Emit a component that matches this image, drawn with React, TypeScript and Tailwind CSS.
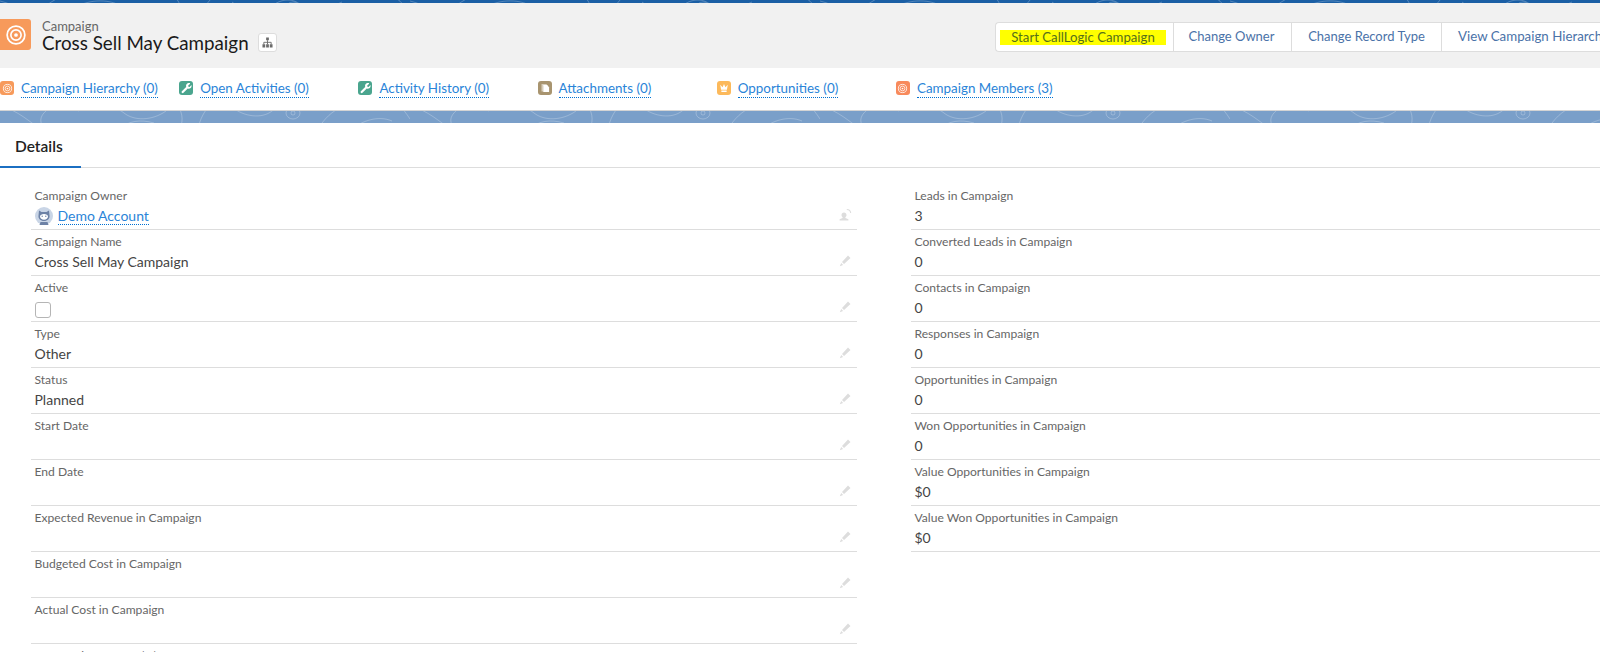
import { ReactNode } from "react";

const leftFields: { label: string; value?: string; kind?: string }[] = [
  { label: "Campaign Owner", kind: "owner" },
  { label: "Campaign Name", value: "Cross Sell May Campaign" },
  { label: "Active", kind: "checkbox" },
  { label: "Type", value: "Other" },
  { label: "Status", value: "Planned" },
  { label: "Start Date" },
  { label: "End Date" },
  { label: "Expected Revenue in Campaign" },
  { label: "Budgeted Cost in Campaign" },
  { label: "Actual Cost in Campaign" },
  { label: "Expected Response (%)" },
];

const rightFields = [
  { label: "Leads in Campaign", value: "3" },
  { label: "Converted Leads in Campaign", value: "0" },
  { label: "Contacts in Campaign", value: "0" },
  { label: "Responses in Campaign", value: "0" },
  { label: "Opportunities in Campaign", value: "0" },
  { label: "Won Opportunities in Campaign", value: "0" },
  { label: "Value Opportunities in Campaign", value: "$0" },
  { label: "Value Won Opportunities in Campaign", value: "$0" },
];

function Contours({ id, y }: { id: string; y: number }) {
  return (
    <svg className="block w-full h-full" aria-hidden="true">
      <defs>
        <pattern id={id} width="410" height="40" patternUnits="userSpaceOnUse" y={y}>
          <g fill="none" stroke="#ffffff" strokeOpacity="0.24" strokeWidth="1">
            <path d="M-6 2c18 2 30 12 46 24M58 0c-14 8-22 14-14 26M78 8c16-8 36-6 46 2s28 8 42-2" />
            <path d="M120 26c8-8 20-10 34-6M176 0c6 8 8 16 4 26M198 26c2-10 6-18 14-26" />
            <path d="M232 4c12 10 30 12 40 4s22-8 30 0M286 10a7 6 0 1 0 14 0a7 6 0 1 0-14 0M291 10a2 2 0 1 0 4 0a2 2 0 1 0-4 0" />
            <path d="M318 26c6-10 14-18 24-22M352 26c10-8 26-14 40-8M396 0c6 4 10 10 14 16" />
          </g>
        </pattern>
      </defs>
      <rect width="100%" height="100%" fill={`url(#${id})`} />
    </svg>
  );
}

function TargetIcon({ size }: { size: number }) {
  return (
    <svg width={size} height={size} viewBox="0 0 24 24" fill="none" stroke="#ffffff" className="block">
      <circle cx="12" cy="12" r="7.6" strokeWidth="1.5" />
      <circle cx="12" cy="12" r="4.4" strokeWidth="1.4" />
      <circle cx="12" cy="12" r="1.6" fill="#ffffff" stroke="none" />
    </svg>
  );
}

function WrenchIcon() {
  return (
    <svg width="14" height="14" viewBox="0 0 24 24" className="block">
      <path
        fill="#ffffff"
        d="M19.2 4.6l-3.4 3.3 .3 2 2 .3 3.3-3.4c.5 2.4-.2 4.4-2 5.6-1.4.9-3 1-4.4.5l-7.3 7.4c-.8.8-2 .8-2.8 0s-.8-2 0-2.8l7.4-7.3c-.5-1.5-.4-3.1.5-4.5 1.300-1.700 3.500-2.500 5.900-2.100z"
      />
    </svg>
  );
}

function DocIcon() {
  return (
    <svg width="14" height="14" viewBox="0 0 24 24" className="block">
      <path fill="#ffffff" fillOpacity="0.55" d="M6 5h9v3H9v10H6z" />
      <path fill="#ffffff" d="M9 7h7l3 4v8H9z" />
    </svg>
  );
}

function CrownIcon() {
  return (
    <svg width="14" height="14" viewBox="0 0 24 24" className="block">
      <path fill="#ffffff" d="M5.500 6.500l4 4L12 5l2.500 5.500 4-4L17 15H7zM7.500 16.200h9V19h-9z" />
    </svg>
  );
}

function Pencil() {
  return (
    <svg width="13" height="13" viewBox="0 0 13 13" className="block">
      <path fill="#dddddd" d="M3 8l6-6.500 2.500 2.500L5 10zM2.200 9l1.900 1.900L.8 12.300z" />
    </svg>
  );
}

function PersonSwap() {
  return (
    <svg width="13" height="13" viewBox="0 0 13 13" className="block">
      <path
        fill="#dddddd"
        d="M5 4.500c1.500 0 2.500 1.200 2.500 2.600 0 1-.5 1.800-1.100 2.200v.7l3 1.200v1.300H.6V11.200l3-1.200v-.7c-.6-.4-1.100-1.200-1.100-2.200 0-1.400 1-2.600 2.500-2.600z"
      />
      <path fill="none" stroke="#dddddd" strokeWidth="1.100" d="M7.800 1.500c2 0 3.700 1.500 3.900 3.500" />
    </svg>
  );
}

function Avatar() {
  return (
    <svg width="18" height="18" viewBox="0 0 18 18" className="block shrink-0">
      <circle cx="9" cy="9" r="9" fill="#c9d5e6" />
      <path fill="#6d82a6" d="M4 3.500l2.500 1.500h5L14 3.500 14.500 8.500c.5 3-2 5.500-5.500 5.500s-6-2.500-5.500-5.500z" />
      <path fill="#ffffff" d="M5 9.500c0-1.600 1.800-2.500 4-2.500s4 .9 4 2.500-1.800 3.200-4 3.200-4-1.600-4-3.200z" />
      <circle cx="7.200" cy="9.300" r=".7" fill="#6d82a6" />
      <circle cx="10.800" cy="9.300" r=".7" fill="#6d82a6" />
      <path fill="#6d82a6" d="M5.500 15h7l1 3h-9z" />
    </svg>
  );
}

function HierarchyIcon() {
  return (
    <svg width="11" height="11" viewBox="0 0 12 12" className="block">
      <path fill="#6b6b6b" d="M4.500 .5h3v3h-3zM.5 8h3v3.500h-3zM4.500 8h3v3.500h-3zM8.500 8h3v3.500h-3z" />
      <path fill="none" stroke="#6b6b6b" d="M6 3.500V8M2 8V5.800h8V8" />
    </svg>
  );
}

function RelatedLink({ bg, icon, text }: { bg: string; icon: ReactNode; text: string }) {
  return (
    <div className="w-[179.200px] flex items-center shrink-0">
      <span className={`w-[14px] h-[14px] rounded-[3px] flex items-center justify-center shrink-0 ${bg}`}>{icon}</span>
      <a className="ml-[7px] text-[13.400px] leading-[18px] text-[#2a84d8] border-b border-dotted border-[#0070d2]">{text}</a>
    </div>
  );
}

function Field({ label, value, kind, editable }: { label: string; value?: string; kind?: string; editable?: boolean }) {
  return (
    <div className="h-[46px] border-b border-[#dddddd] flex justify-between pl-[3.500px] pr-[5px] shrink-0">
      <div className="pt-[4px] min-w-0">
        <div className="text-[12.100px] leading-[16px] text-[#666666]">{label}</div>
        {kind === "owner" && (
          <div className="flex items-center h-[20px] mt-[2px]">
            <Avatar />
            <a className="ml-[5px] text-[14px] leading-[17px] text-[#2a84d8] border-b border-dotted border-[#0070d2]">Demo Account</a>
          </div>
        )}
        {kind === "checkbox" && <div className="mt-[6px] w-[16px] h-[16px] rounded-[3px] border border-[#b5b5b5] bg-white" />}
        {value && <div className="mt-[2px] text-[14px] leading-[20px] text-[#444444]">{value}</div>}
      </div>
      {editable && <div className="self-end pb-[8px]">{kind === "owner" ? <PersonSwap /> : <Pencil />}</div>}
    </div>
  );
}

export default function App() {
  return (
    <div className="h-[652px] w-[1600px] overflow-hidden bg-white font-['Lato','Open_Sans',sans-serif]">
      <div className="h-[3px] bg-[#1b5fa5]">
        <Contours id="strip" y={-2} />
      </div>

      {/* Record header */}
      <div className="h-[65px] bg-[#f1f1f1] flex items-start justify-between">
        <div className="flex items-start pt-[16px]">
          <div className="w-[31px] h-[31px] bg-[#f79a5b] rounded-r-[3px] flex items-center justify-center">
            <TargetIcon size={28} />
          </div>
          <div className="ml-[11px] pt-[0.500px]">
            <div className="text-[13px] leading-[13px] text-[#666666]">Campaign</div>
            <div className="flex items-center">
              <h1 className="text-[18.800px] leading-[19px] text-[#1a1a1a]">Cross Sell May Campaign</h1>
              <button className="ml-[9px] w-[19px] h-[19px] bg-white border border-[#dddddd] rounded-[3px] flex items-center justify-center">
                <HierarchyIcon />
              </button>
            </div>
          </div>
        </div>
        <div className="mt-[19px] h-[30px] w-[605px] shrink-0 bg-white border border-[#dddddd] border-r-0 rounded-l-[4px] flex text-[13px] text-[#4a72a8]">
          <div className="w-[178px] border-r border-[#dddddd] pl-[4px] flex items-center">
            <span className="w-[166px] h-[15px] leading-[15px] bg-[#ffff00] text-[#56701a] text-center text-[13.200px]">Start CallLogic Campaign</span>
          </div>
          <div className="w-[118px] border-r border-[#dddddd] pr-[2px] flex items-center justify-center">Change Owner</div>
          <div className="w-[150px] border-r border-[#dddddd] flex items-center justify-center">Change Record Type</div>
          <div className="flex-1 pl-[16px] flex items-center whitespace-nowrap overflow-hidden text-[13.300px]">View Campaign Hierarchy</div>
        </div>
      </div>

      {/* Related list links */}
      <div className="h-[43px] bg-white flex items-center pb-[2px] border-b border-[#d4d4d4]">
        <RelatedLink bg="bg-[#f79a5b]" icon={<TargetIcon size={13} />} text="Campaign Hierarchy (0)" />
        <RelatedLink bg="bg-[#4aa58e]" icon={<WrenchIcon />} text="Open Activities (0)" />
        <RelatedLink bg="bg-[#4aa58e]" icon={<WrenchIcon />} text="Activity History (0)" />
        <RelatedLink bg="bg-[#a8946f]" icon={<DocIcon />} text="Attachments (0)" />
        <RelatedLink bg="bg-[#fcb95b]" icon={<CrownIcon />} text="Opportunities (0)" />
        <RelatedLink bg="bg-[#f88a5c]" icon={<TargetIcon size={13} />} text="Campaign Members (3)" />
      </div>

      {/* Blue page background strip */}
      <div className="h-[12px] bg-[#7a9fc9]">
        <Contours id="band" y={-8} />
      </div>

      {/* Tabs */}
      <div className="h-[45px] border-b border-[#dddddd] flex">
        <div className="w-[81px] border-b-2 border-[#1b6fc2] h-[45px] pl-[15px] pt-[13px] text-[15.500px] leading-[20px] font-semibold text-[#222222]">Details</div>
      </div>

      {/* Fields */}
      <div className="flex pt-[16px] pl-[31px]">
        <div className="w-[826px] shrink-0 flex flex-col">
          {leftFields.map((f) => (
            <Field key={f.label} label={f.label} value={f.value} kind={f.kind} editable />
          ))}
        </div>
        <div className="ml-[54px] flex-1 flex flex-col">
          {rightFields.map((f) => (
            <Field key={f.label} label={f.label} value={f.value} />
          ))}
        </div>
      </div>
    </div>
  );
}
